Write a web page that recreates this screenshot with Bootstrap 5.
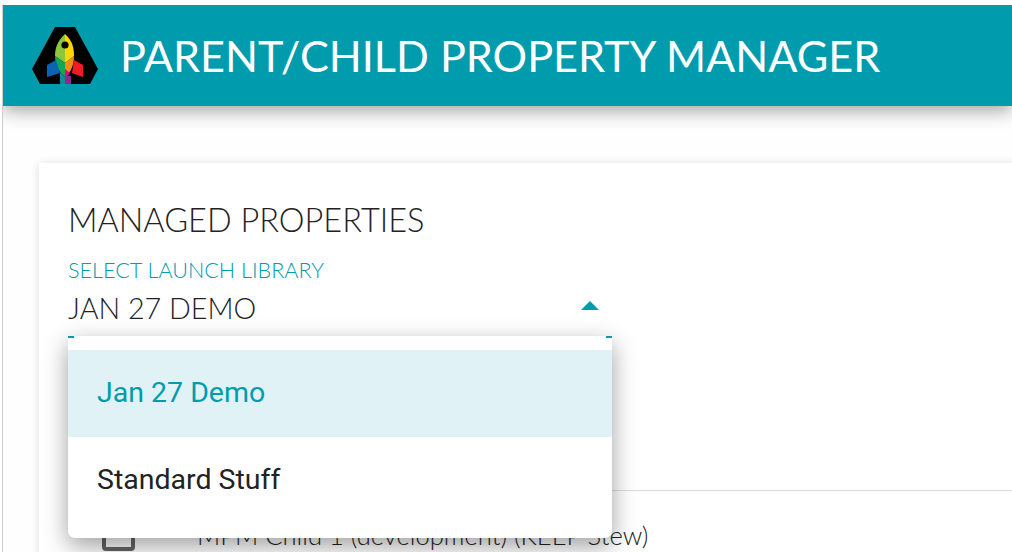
<!DOCTYPE html>
<html lang="en">
<head>
  <meta charset="UTF-8" />
  <meta name="viewport" content="width=device-width, initial-scale=1.0"/>
  <title>Parent/Child Property Manager</title>
  <link href="https://cdn.jsdelivr.net/npm/bootstrap@5.3.2/dist/css/bootstrap.min.css" rel="stylesheet" />
  <style>
    html, body {
      height: 552px;
      overflow: hidden;
    }
    body {
      background-color: #fff;
      font-family: 'Lato', sans-serif;
      color: #222;
      padding: 5px 0 0 2px;
    }
    .app-frame {
      border-left: 1px solid #ccc;
      height: 547px;
      overflow: hidden;
    }
    .app-bar {
      background-color: #009cad;
      height: 101px;
      padding-left: 29px;
      box-shadow: 0 6px 16px rgba(0, 0, 0, 0.32);
      position: relative;
      z-index: 2;
    }
    .app-title {
      color: #fff;
      font-size: 43.2px;
      font-weight: 400;
      line-height: 1;
      margin: 0 0 0 22px;
      white-space: nowrap;
    }
    .app-body {
      padding: 57px 0 0 36px;
      background-color: #fefefe;
    }
    .prop-card {
      background-color: #fff;
      margin-right: -30px;
      padding: 38px 0 0 29px;
      height: 420px;
      border: 0;
      border-radius: 2px;
      box-shadow: 0 1px 8px rgba(0, 0, 0, 0.14);
    }
    .prop-title {
      font-size: 32.5px;
      font-weight: 300;
      line-height: 38px;
      margin: 0 0 19px;
      color: #222;
    }
    .picker {
      width: 544px;
      position: relative;
    }
    .picker-label {
      color: #009cad;
      font-size: 21.6px;
      font-weight: 300;
      line-height: 24px;
    }
    .picker-value {
      font-size: 28.7px;
      font-weight: 300;
      line-height: 34px;
      margin-top: 9px;
      padding-right: 13px;
    }
    .picker-caret {
      width: 0;
      height: 0;
      margin-bottom: 6px;
      border-left: 9px solid transparent;
      border-right: 9px solid transparent;
      border-bottom: 9px solid #009cad;
    }
    .picker-menu {
      position: absolute;
      top: 78px;
      left: 0;
      width: 544px;
      margin: 0;
      padding: 14px 0;
      background-color: #fff;
      border-radius: 2px 2px 7px 7px;
      box-shadow: 0 8px 24px rgba(0, 0, 0, 0.38);
      z-index: 5;
      font-family: 'Roboto', sans-serif;
      font-size: 28.5px;
      list-style: none;
    }
    .picker-menu::before {
      content: "";
      position: absolute;
      top: 0;
      left: 0;
      right: 0;
      height: 2px;
      background: linear-gradient(to right, #009cad 6px, transparent 6px, transparent 538px, #009cad 538px);
    }
    .picker-item {
      height: 87px;
      padding-left: 29px;
      display: flex;
      align-items: center;
      color: #222;
    }
    .picker-item-on {
      background-color: #e0f2f5;
      color: #009cad;
    }
    .prop-rows {
      margin-top: 165px;
      border-top: 1px solid #ddd;
    }
    .prop-row {
      padding: 27px 0 0 34px;
      font-size: 25.6px;
      font-weight: 300;
      line-height: 30px;
    }
    .prop-row-name {
      margin-top: 2px;
    }
    .prop-check {
      width: 33px;
      height: 33px;
      border: 4px solid #666;
      border-radius: 4px;
      margin-right: 62px;
      flex-shrink: 0;
    }
  </style>
</head>
<body>
  <div class="app-frame">
    <header class="app-bar d-flex align-items-center">
      <svg width="66" height="58" viewBox="0 0 66 58" aria-label="Logo">
        <polygon points="23,0 43,0 66,42 58,57 8,57 0,42" fill="#000"/>
        <path d="M33 7 C25 14 23 22 23 29 L33 36 Z" fill="#8cc63f"/>
        <path d="M33 7 C41 14 42 22 42 29 L33 36 Z" fill="#ffd400"/>
        <path d="M23 29 C23 38 27 45 33 50 L33 36 Z" fill="#12a84f"/>
        <path d="M42 29 C42 38 39 45 33 50 L33 36 Z" fill="#f58a1f"/>
        <polygon points="15,38 24,33 28,46 15,50" fill="#0b63b5"/>
        <polygon points="42,33 51,38 51,50 40,46" fill="#ee1c25"/>
        <path d="M28 45 L33 50 L33 57 L28 57 Z" fill="#0b8f9e"/>
        <polygon points="33,42 38,46 33,51" fill="#ec008c"/>
        <rect x="33" y="49" width="6" height="8" fill="#92278f"/>
        <circle cx="33" cy="18" r="3.6" fill="#000"/>
      </svg>
      <h1 class="app-title">PARENT/CHILD PROPERTY MANAGER</h1>
    </header>
    <main class="app-body">
      <section class="card prop-card">
        <h2 class="prop-title">MANAGED PROPERTIES</h2>
        <div class="picker">
          <div class="picker-label">SELECT LAUNCH LIBRARY</div>
          <div class="picker-value d-flex align-items-center justify-content-between">
            <span>JAN 27 DEMO</span>
            <span class="picker-caret"></span>
          </div>
          <ul class="picker-menu">
            <li class="picker-item picker-item-on">Jan 27 Demo</li>
            <li class="picker-item">Standard Stuff</li>
          </ul>
        </div>
        <div class="prop-rows">
          <div class="prop-row d-flex align-items-start">
            <span class="prop-check"></span>
            <span class="prop-row-name text-nowrap">MPM Child 1 (development) (KEEP Stew)</span>
          </div>
        </div>
      </section>
    </main>
  </div>
  <script src="https://cdn.jsdelivr.net/npm/bootstrap@5.3.2/dist/js/bootstrap.bundle.min.js"></script>
</body>
</html>
